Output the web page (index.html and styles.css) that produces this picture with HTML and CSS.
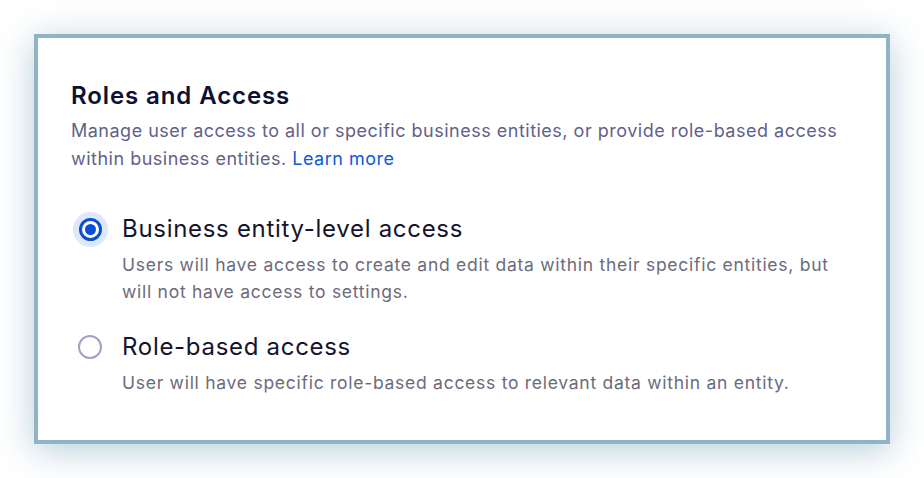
FILE: index.html
```html
<!DOCTYPE html>
<html lang="en">
<head>
<meta charset="utf-8">
<title>Roles and Access</title>
<link rel="stylesheet" href="styles.css">
</head>
<body>
<div class="page">
  <section class="card">
    <h2 class="title">Roles and Access</h2>
    <p class="intro">Manage user access to all or specific business entities, or provide role-based access within business entities. <a class="link" href="#">Learn more</a></p>
    <div class="options">
      <label class="option">
        <span class="radio-cell"><span class="radio radio--checked"><span class="dot"></span></span></span>
        <span class="option-body">
          <span class="option-title">Business entity-level access</span>
          <span class="option-desc">Users will have access to create and edit data within their specific entities, but will not have access to settings.</span>
        </span>
      </label>
      <label class="option">
        <span class="radio-cell"><span class="radio"></span></span>
        <span class="option-body">
          <span class="option-title">Role-based access</span>
          <span class="option-desc">User will have specific role-based access to relevant data within an entity.</span>
        </span>
      </label>
    </div>
  </section>
</div>
</body>
</html>
```

FILE: styles.css
```css
* { box-sizing: border-box; }
html, body { margin: 0; padding: 0; background: #ffffff; }
body { font-family: Inter, "Noto Sans", sans-serif; }
.page { padding: 34px; width: 924px; }
.card {
  width: 856px;
  height: 410px;
  border: 4px solid #8fb4c5;
  background: #ffffff;
  box-shadow: 0 6px 34px rgba(80, 135, 170, 0.42);
  padding: 44px 33px 0 33px;
}
.title {
  margin: 0;
  font-size: 24px;
  line-height: 28px;
  font-weight: 600;
  color: #0e0f33;
  letter-spacing: 0.9px;
}
.intro {
  margin: 7px 0 0 0;
  font-size: 18px;
  line-height: 28px;
  color: #626189;
  letter-spacing: 0.5px;
}
.link { color: #0a5bd8; text-decoration: none; }
.options { margin-top: 40px; display: flex; flex-direction: column; gap: 26px; }
.option { display: flex; gap: 14px; align-items: flex-start; }
.radio-cell { width: 36px; height: 32px; display: flex; align-items: center; justify-content: center; flex: none; margin-left: 1px; }
.radio {
  width: 24px; height: 24px; border-radius: 50%;
  border: 2.5px solid #a49fc4;
  background: #fff;
  display: flex; align-items: center; justify-content: center;
}
.radio--checked {
  width: 23px; height: 23px;
  border: 3px solid #0a50d4;
  box-shadow: 0 0 0 6px #dde8fb;
}
.dot { width: 11px; height: 11px; border-radius: 50%; background: #0a50d4; }
.option-body { display: flex; flex-direction: column; }
.option-title { font-size: 24px; line-height: 32px; color: #14142e; font-weight: 400; letter-spacing: 0.7px; }
.option-desc { margin-top: 6px; font-size: 17.5px; line-height: 27px; color: #6c6b7c; letter-spacing: 0.73px; }
```
